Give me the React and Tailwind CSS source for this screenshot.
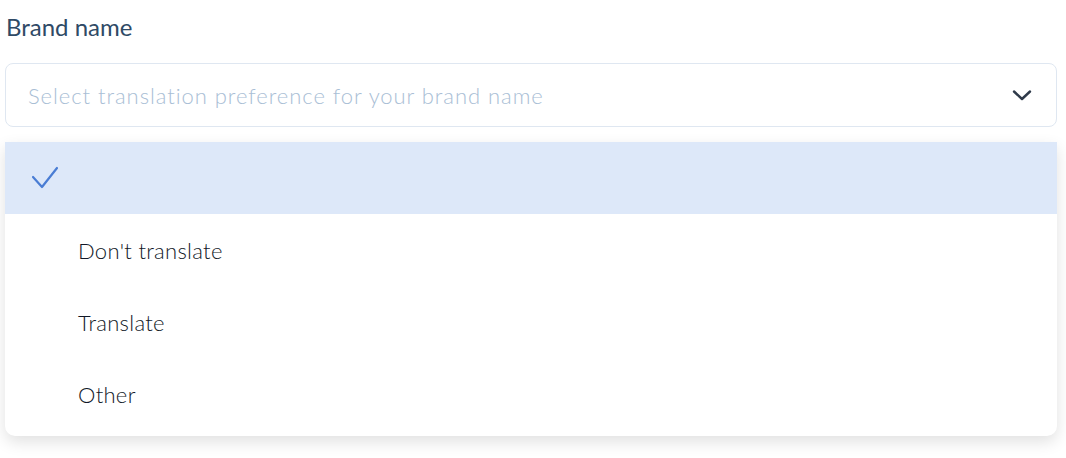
import { useState } from 'react';

const options = ["", "Don't translate", 'Translate', 'Other'];

const App = () => {
    const [selected] = useState(0);

    return (
        <div className="min-h-screen bg-white font-['Lato',sans-serif]">
            <div className="pl-[5px] pr-[9px] pt-[11px]">
                <label className="block pl-px text-[24px] leading-[32px] text-[#2f4a66]">Brand name</label>
                <div className="mt-[20px] flex h-[64px] items-center justify-between rounded-[8px] border border-[#dfe7f1] bg-white pl-[22px] pr-[22px]">
                    <span className="text-[22px] font-light tracking-[0.95px] text-[#a9bed5]">Select translation preference for your brand name</span>
                    {/* chevron */}
                    <svg width="24" height="24" viewBox="0 0 24 24" fill="none" stroke="#2f3a4a" strokeWidth="2.4" strokeLinecap="round" strokeLinejoin="round">
                        <path d="M4 8.5l8 7.5 8-7.5" />
                    </svg>
                </div>
                <ul className="mt-[15px] overflow-hidden rounded-b-[10px] bg-white pb-[6px] shadow-[0_6px_16px_rgba(0,0,0,0.12)]">
                    {options.map((opt, i) => (
                        <li
                            key={i}
                            className={`flex h-[72px] items-center ${i === selected ? 'bg-[#dde8f9]' : ''}`}
                        >
                            <span className="flex w-[73px] pl-[26px]">
                                {i === selected && (
                                    <svg width="28" height="24" viewBox="0 0 28 24" fill="none" stroke="#4a7dd4" strokeWidth="2.2" strokeLinecap="round" strokeLinejoin="round">
                                        <path d="M2 11l9 10L26 2" />
                                    </svg>
                                )}
                            </span>
                            <span className="text-[22px] font-light tracking-[0.3px] text-[#111827]">{opt}</span>
                        </li>
                    ))}
                </ul>
            </div>
        </div>
    );
};

export default App;
